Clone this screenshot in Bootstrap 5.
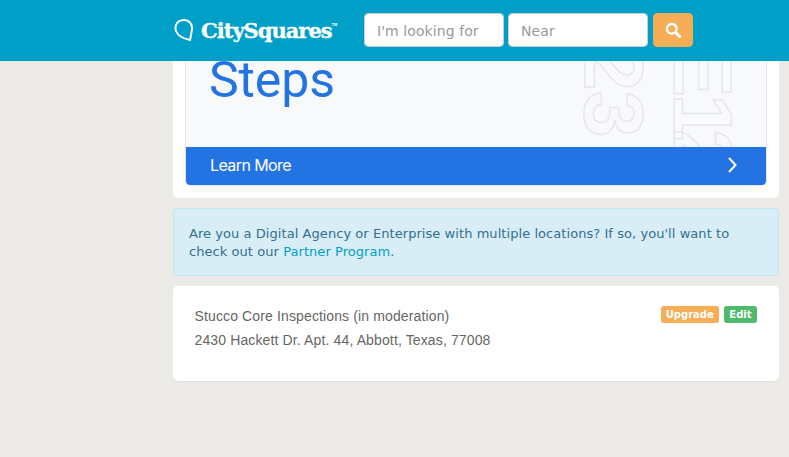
<!DOCTYPE html>
<html lang="en">
  <head>
    <meta charset="UTF-8" />
    <meta name="viewport" content="width=device-width, initial-scale=1.0" />
    <title>CitySquares</title>
    <link
      href="https://cdn.jsdelivr.net/npm/bootstrap@5.3.3/dist/css/bootstrap.min.css"
      rel="stylesheet"
    />
    <style>
      body { background: #ebeae6; height: 457px; overflow: hidden; }
      .top-bar { background: #009fc7; height: 61px; padding: 0 0 1px 174px; }
      .logo-text { font: 700 21px/1 "DejaVu Serif", serif; letter-spacing: -1px; color: #fff; margin-left: 7px; -webkit-text-stroke: .3px #fff; }
      .logo-tm { font: 700 4px/1 "Liberation Sans", sans-serif; color: #fff; margin-top: -10px; }
      .logo-wrap { width: 190px; }
      .search-box.form-control { width: 140px; height: 34px; margin-right: 4px; padding: 1px 12px 0; font: 14px "DejaVu Sans", sans-serif; letter-spacing: .07px; border: 1px solid #ccc; border-radius: 4px; color: #555; }
      .search-box::placeholder { color: #999; opacity: 1; }
      .search-btn.btn { width: 40px; height: 34px; padding: 0; background: #f5ae56; border: 1px solid #f0ad4e; border-radius: 4px; margin-left: 1px; }
      .page-col { margin-left: 173px; width: 606px; }
      .promo-panel { background: #fff; padding: 0 12px 12px; border-radius: 0 0 5px 5px; margin-bottom: 10px; }
      .promo-inner { height: 125px; border: 1px solid #e4e6ea; border-top: 0; border-radius: 0 0 5px 5px; background: #f8f9fb; overflow: hidden; position: relative; }
      .promo-body { height: 86px; overflow: hidden; padding-left: 23px; }
      .promo-title { font: 400 50px/38px Roboto, sans-serif; color: #2473e3; letter-spacing: -.1px; margin: 0; }
      .promo-foot { height: 38px; background: #2473e3; color: #fff; padding: 0 29px 2px 24px; font: 400 16px Inter, sans-serif; letter-spacing: -.6px; border-radius: 0 0 4px 4px; position: relative; }
      .ghost-type { position: absolute; writing-mode: vertical-rl; font: 700 84px/1 "Liberation Sans", sans-serif; color: transparent; -webkit-text-stroke: 1.5px #e6e7ea; }
      .ghost-a { left: 386px; top: -17px; }
      .ghost-b { left: 475px; top: -20px; }
      .ghost-e { letter-spacing: -3px; }
      .ghost-one { letter-spacing: -12px; }
      .info-note { background: #d9edf7; border: 1px solid #bce8f1; border-radius: 4px; color: #31708f; padding: 16px 15px 15px; margin-bottom: 10px; height: 68px; font: 13px/18px "DejaVu Sans", sans-serif; letter-spacing: .06px; }
      .info-note a { color: #009fc7; text-decoration: none; }
      .listing-panel { background: #fff; border-radius: 5px; height: 95px; padding: 18px 22px 18px 21.500px; font: 14px/24px "Liberation Sans", sans-serif; letter-spacing: .13px; color: #666; box-shadow: 0 1px 1px rgba(0,0,0,.05); }
      .tag-list { margin-top: 2px; gap: 5px; }
      .tag-pill { font: 700 10px/17px "DejaVu Sans", sans-serif; letter-spacing: 0; color: #fff; border-radius: 3px; }
      .tag-orange { background: #f5ae56; padding: 0 5px; }
      .tag-green { background: #4dbb69; padding: 0 5.500px; }
    </style>
  </head>
  <body>
    <header class="top-bar d-flex align-items-center">
      <a class="logo-wrap d-flex align-items-center text-decoration-none" href="#">
        <svg width="20" height="24" viewBox="0 0 20 24" fill="none" stroke="#fff" stroke-width="2">
          <path d="M2 13C0 7 4 2 10 2c5 0 8.500 4 8 9-.4 4-1.500 8-2 11C11 21 4 18 2 13z" />
        </svg>
        <span class="logo-text">CitySquares</span>
        <span class="logo-tm">TM</span>
      </a>
      <input class="form-control search-box" type="text" placeholder="I'm looking for" />
      <input class="form-control search-box" type="text" placeholder="Near" />
      <button class="btn search-btn d-flex align-items-center justify-content-center" type="button" aria-label="Search">
        <svg width="16" height="16" viewBox="0 0 16 16" fill="none" stroke="#fff">
          <circle cx="6.800" cy="6.800" r="4.800" stroke-width="2.400" />
          <path d="M10.500 10.500l4 4" stroke-width="3" stroke-linecap="round" />
        </svg>
      </button>
    </header>

    <main class="page-col">
      <section class="promo-panel">
        <div class="promo-inner">
          <div class="promo-body"><p class="promo-title">Steps</p></div>
          <span class="ghost-type ghost-a">23</span>
          <span class="ghost-type ghost-b"><span class="ghost-e">E</span><span class="ghost-one">1</span>2</span>
          <div class="promo-foot d-flex align-items-center justify-content-between">
            <span>Learn More</span>
            <svg width="10" height="16" viewBox="0 0 10 16" fill="none" stroke="#fff" stroke-width="2"><path d="M2 1l6.500 7L2 15" /></svg>
          </div>
        </div>
      </section>

      <div class="info-note">
        Are you a Digital Agency or Enterprise with multiple locations? If so, you'll want to
        check out our <a href="#">Partner Program</a>.
      </div>

      <section class="listing-panel d-flex justify-content-between">
        <div>
          <div>Stucco Core Inspections (in moderation)</div>
          <div>2430 Hackett Dr. Apt. 44, Abbott, Texas, 77008</div>
        </div>
        <div class="tag-list d-flex align-items-start">
          <span class="tag-pill tag-orange">Upgrade</span>
          <span class="tag-pill tag-green">Edit</span>
        </div>
      </section>
    </main>

    <script src="https://cdn.jsdelivr.net/npm/bootstrap@5.3.3/dist/js/bootstrap.bundle.min.js"></script>
  </body>
</html>
